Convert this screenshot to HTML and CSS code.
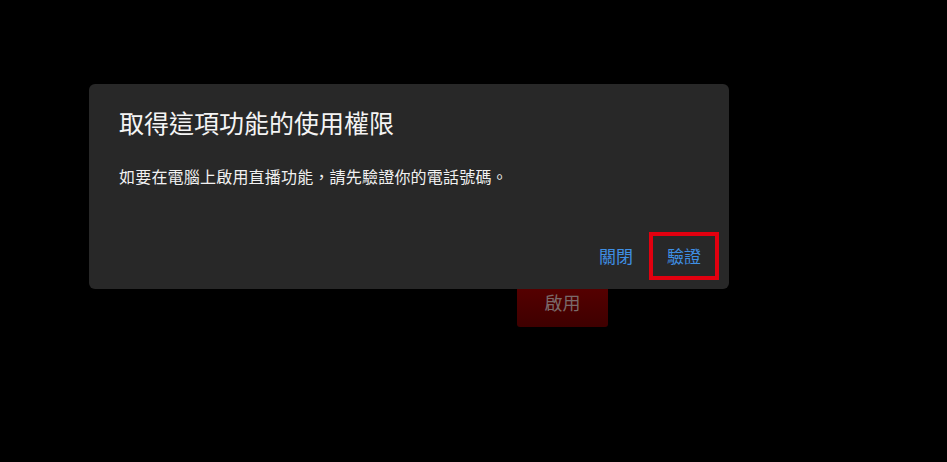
FILE: index.html
```html
<!DOCTYPE html>
<html lang="zh-Hant">
<head>
<meta charset="utf-8">
<title>取得這項功能的使用權限</title>
<link rel="stylesheet" href="styles.css">
</head>
<body>
<div class="page">
  <button class="enable-btn">啟用</button>
</div>
<div class="dialog" role="dialog">
  <h2 class="dialog-title">取得這項功能的使用權限</h2>
  <p class="dialog-body">如要在電腦上啟用直播功能，請先驗證你的電話號碼。</p>
  <div class="dialog-actions">
    <button class="action-btn">關閉</button>
    <button class="action-btn action-btn--highlight">驗證</button>
  </div>
</div>
</body>
</html>
```
FILE: styles.css
```css
html, body {
  margin: 0;
  padding: 0;
  background: #000;
  height: 100%;
  overflow: hidden;
  font-family: "Noto Sans CJK TC", "Noto Sans", sans-serif;
}

.page {
  padding: 277px 0 0 517px;
}

.enable-btn {
  width: 91px;
  height: 50px;
  border: none;
  border-radius: 3px;
  background: linear-gradient(#5c0000, #3e0000);
  color: #7a6a6a;
  font-family: inherit;
  font-size: 18px;
  padding: 0;
}

.dialog {
  position: absolute;
  left: 89px;
  top: 84px;
  width: 640px;
  box-sizing: border-box;
  background: #282828;
  border-radius: 6px;
  padding: 22px 10px 9px 30px;
  display: flex;
  flex-direction: column;
}

.dialog-title {
  margin: 0;
  font-size: 25px;
  line-height: 32px;
  font-weight: 400;
  color: #f4f4f4;
}

.dialog-body {
  margin: 26px 0 0;
  font-size: 16px;
  line-height: 24px;
  letter-spacing: 0.2px;
  color: #f1f1f1;
}

.dialog-actions {
  margin-top: 44px;
  display: flex;
  justify-content: flex-end;
}

.action-btn {
  height: 48px;
  padding: 0 16px;
  border: none;
  background: transparent;
  color: #3f8fe4;
  font-family: inherit;
  font-size: 17px;
  line-height: 24px;
}

.action-btn--highlight {
  border: 4px solid #e2000f;
  padding: 0 14px;
}
```
